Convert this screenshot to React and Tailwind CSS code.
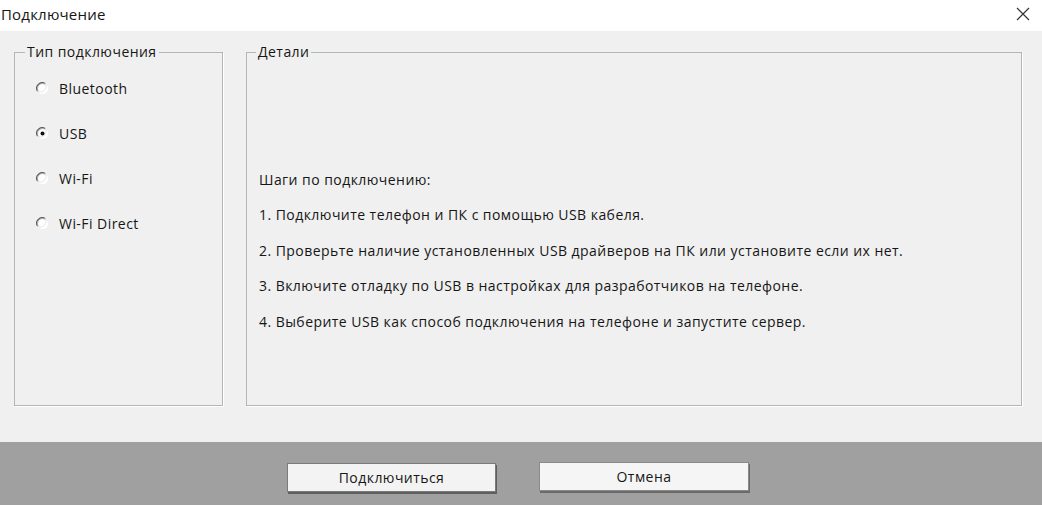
import React from 'react';

const font = { fontFamily: '"Open Sans", "Noto Sans", "DejaVu Sans", sans-serif', letterSpacing: '0.45px' };

const Radio = ({ checked }) => (
  <svg width="13" height="13" viewBox="0 0 13 13" className="shrink-0">
    <circle cx="6.5" cy="6.5" r="5.5" fill="#fff" />
    <path d="M1.6 9.2 A5.5 5.5 0 0 1 9.2 1.6" fill="none" stroke="#5e5e5e" strokeWidth="1.3" />
    <path d="M3 10.2 A4.3 4.3 0 0 1 10.2 3" fill="none" stroke="#a3a3a3" strokeWidth="0.9" />
    <path d="M9.2 1.6 A5.5 5.5 0 0 1 1.6 9.2" fill="none" stroke="#e6e6e6" strokeWidth="1" />
    {checked && <circle cx="6.5" cy="6.5" r="2" fill="#111" />}
  </svg>
);

const GroupBox = ({ title, titleLeft, className, children }) => (
  <div className={`relative border border-[#b5b5b5] shadow-[1px_1px_0_#fff] ${className}`}>
    <span className={`absolute -top-[11px] ${titleLeft} px-[2px] bg-[#f0f0f0] leading-[19px]`}>{title}</span>
    {children}
  </div>
);

const options = [
  { label: 'Bluetooth', checked: false },
  { label: 'USB', checked: true },
  { label: 'Wi-Fi', checked: false },
  { label: 'Wi-Fi Direct', checked: false },
];

const steps = [
  'Шаги по подключению:',
  '1. Подключите телефон и ПК с помощью USB кабеля.',
  '2. Проверьте наличие установленных USB драйверов на ПК или установите если их нет.',
  '3. Включите отладку по USB в настройках для разработчиков на телефоне.',
  '4. Выберите USB как способ подключения на телефоне и запустите сервер.',
];

export default function App() {
  return (
    <div className="w-[1042px] h-[505px] flex flex-col text-[#161616] text-[14px] overflow-hidden" style={font}>
      {/* title bar */}
      <div className="h-[31px] bg-white flex items-center justify-between pl-[1px] pr-[12px] shrink-0">
        <span className="text-[15px] -mt-[2px]" style={{ letterSpacing: '0.2px' }}>Подключение</span>
        <svg width="14" height="14" viewBox="0 0 14 14" className="-mt-[3px]">
          <path d="M1 1 L13 13 M13 1 L1 13" stroke="#333" strokeWidth="1.2" />
        </svg>
      </div>

      {/* body */}
      <div className="flex-1 bg-[#f0f0f0] flex gap-[23px] pl-[14px] pr-[20px] pt-[21px] pb-[36px]">
        <GroupBox title="Тип подключения" titleLeft="left-[10px]" className="w-[209px]">
          <div className="flex flex-col gap-[26px] pl-[21px] pt-[26px]">
            {options.map((o) => (
              <label key={o.label} className="flex items-center gap-[10px] h-[19px]">
                <Radio checked={o.checked} />
                <span>{o.label}</span>
              </label>
            ))}
          </div>
        </GroupBox>

        <GroupBox title="Детали" titleLeft="left-[9px]" className="flex-1">
          <div className="flex flex-col gap-[16.4px] pl-[12px] pt-[117px]">
            {steps.map((s) => (
              <div key={s} className="h-[19px] leading-[19px]">{s}</div>
            ))}
          </div>
        </GroupBox>
      </div>

      {/* footer */}
      <div className="h-[63px] bg-[#a0a0a0] flex justify-center gap-[43px] pt-[20px] pr-[6px] shrink-0">
        <button className="w-[209px] h-[29px] bg-[#f3f3f3] border border-[#7a7a7a] shadow-[1px_2px_0_#5f5f5f] text-[14px] mt-[1px]" style={font}>
          Подключиться
        </button>
        <button className="w-[210px] h-[29px] bg-[#f5f5f5] border border-[#8a8a8a] shadow-[1px_2px_0_#6a6a6a] text-[14px]" style={font}>
          Отмена
        </button>
      </div>
    </div>
  );
}
